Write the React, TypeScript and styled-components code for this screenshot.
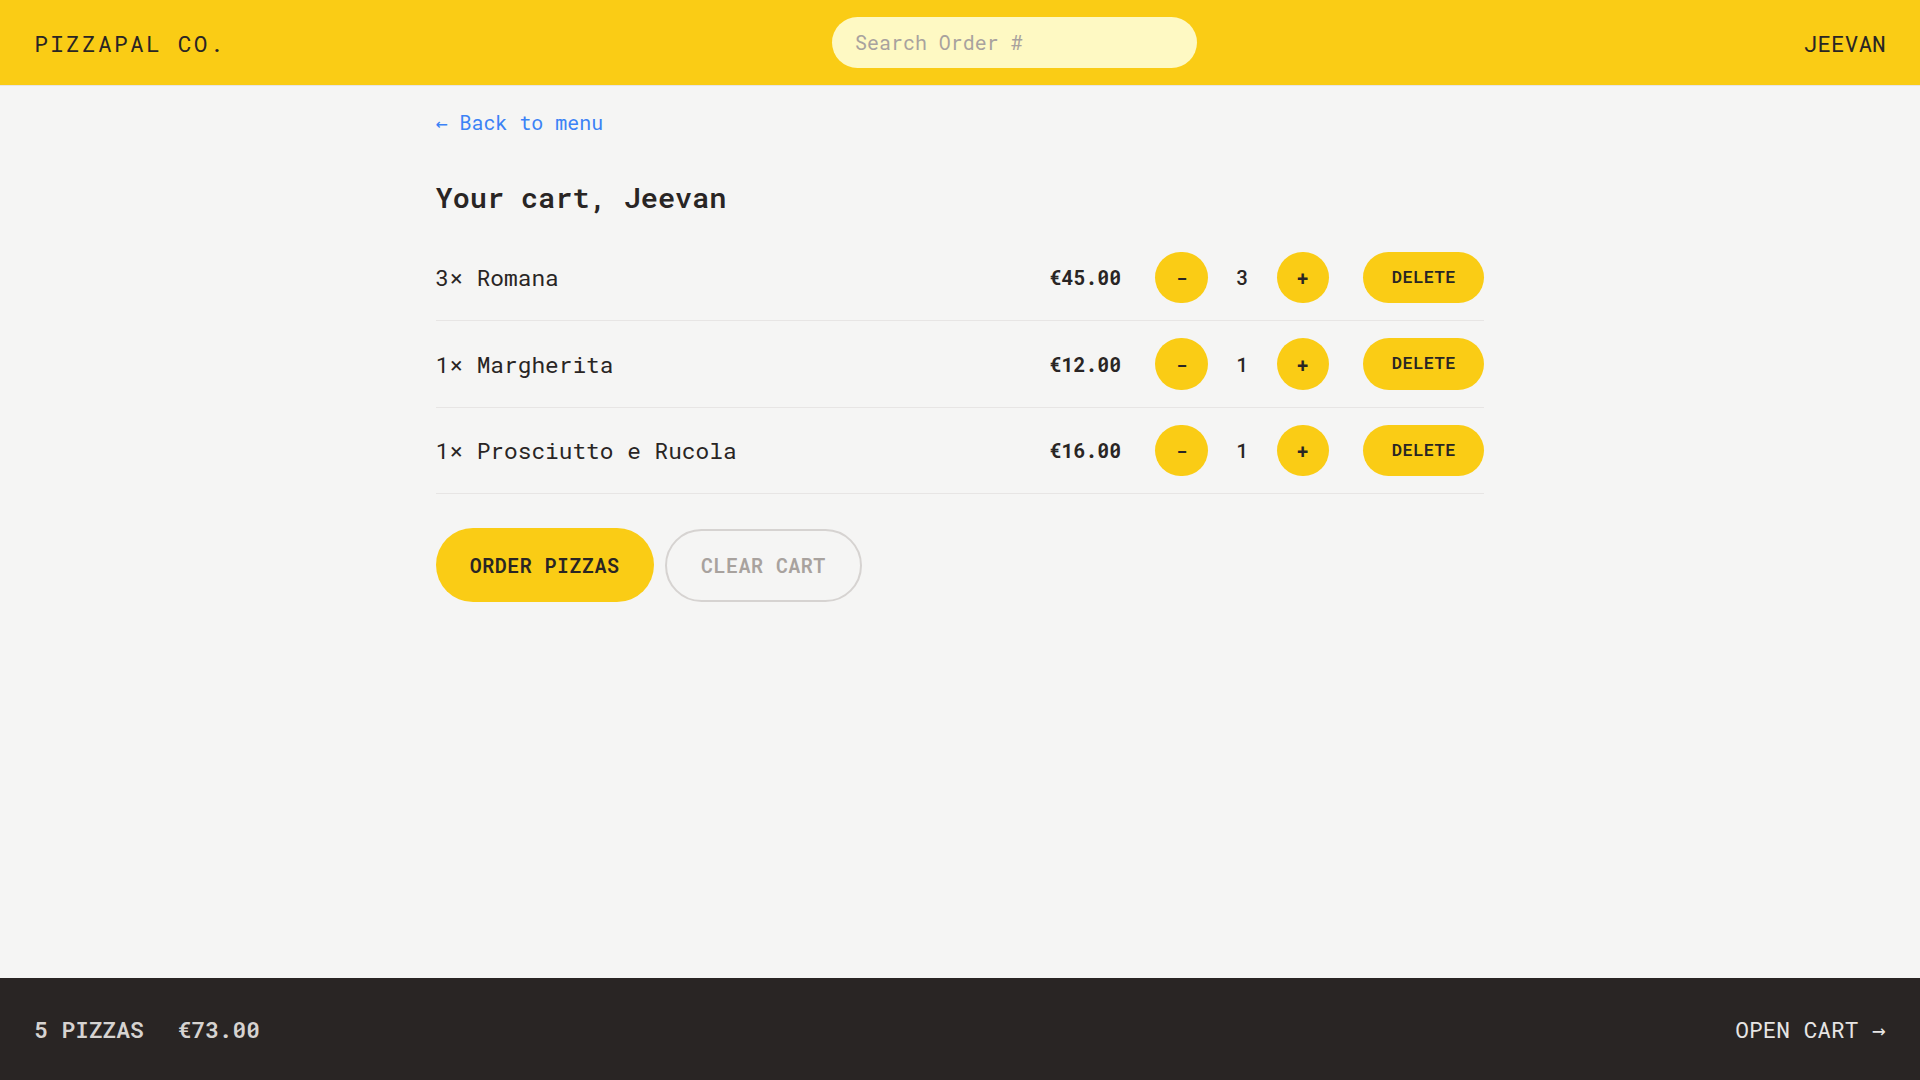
import React from "react";
import styled, { createGlobalStyle, css } from "styled-components";

const GlobalStyle = createGlobalStyle`
  *, *::before, *::after { box-sizing: border-box; }
  html { font-size: 22.8px; }
  body {
    margin: 0;
    background: #f5f5f4;
    color: #292524;
    font-family: "Roboto Mono", "DejaVu Sans Mono", "Liberation Mono", monospace;
    line-height: 1.5;
  }
`;

const Layout = styled.div`
  display: grid;
  height: 100vh;
  grid-template-rows: auto 1fr auto;
`;

const Header = styled.header`
  display: flex;
  align-items: center;
  justify-content: space-between;
  background: #facc15;
  padding: 0.75rem 1.5rem;
  border-bottom: 1px solid #e7e5e4;
  text-transform: uppercase;
`;

const Logo = styled.a`
  color: #292524;
  text-decoration: none;
  letter-spacing: 0.1em;
  font-size: 1rem;
`;

const SearchInput = styled.input`
  width: 16rem;
  border: none;
  border-radius: 9999px;
  background: #fef9c3;
  padding: 0.5rem 1rem;
  font-family: inherit;
  font-size: 0.875rem;
  line-height: 1.25rem;
  color: #292524;
  outline: none;
  &::placeholder { color: #a8a29e; }
`;

const UserName = styled.div`
  font-size: 1rem;
`;

const Scroller = styled.div`
  overflow: auto;
`;

const Main = styled.main`
  max-width: 48rem;
  margin: 0 auto;
`;

const Cart = styled.div`
  padding: 0.75rem 1rem;
`;

const BackRow = styled.div`
  line-height: 1.5rem;
`;

const BackLink = styled.a`
  font-size: 0.875rem;
  line-height: 1.25rem;
  color: #3b82f6;
  text-decoration: none;
`;

const Title = styled.h2`
  margin: 1.75rem 0 0;
  font-size: 1.25rem;
  line-height: 1.75rem;
  font-weight: 600;
`;

const ItemList = styled.ul`
  margin: 0.75rem 0 0;
  padding: 0;
  list-style: none;
  border-bottom: 1px solid #e7e5e4;
`;

const Item = styled.li`
  display: flex;
  align-items: center;
  justify-content: space-between;
  padding: 0.75rem 0;
  & + & { border-top: 1px solid #e7e5e4; }
`;

const ItemName = styled.p`
  margin: 0;
`;

const ItemActions = styled.div`
  display: flex;
  align-items: center;
  gap: 1.5rem;
`;

const Price = styled.p`
  margin: 0;
  font-size: 0.875rem;
  line-height: 1.25rem;
  font-weight: 700;
`;

const QtyGroup = styled.div`
  display: flex;
  align-items: center;
  gap: 1.25rem;
`;

const Qty = styled.span`
  font-size: 0.875rem;
  line-height: 1.25rem;
  font-weight: 500;
`;

type Variant = "primary" | "secondary" | "small" | "round";

const variants: Record<Variant, ReturnType<typeof css>> = {
  primary: css`
    padding: 1rem 1.5rem;
    font-size: 0.875rem;
    line-height: 1.25rem;
  `,
  small: css`
    padding: 0.625rem 1.25rem;
    font-size: 0.75rem;
    line-height: 1rem;
  `,
  round: css`
    padding: 0.5rem 0.875rem;
    font-size: 0.875rem;
    line-height: 1.25rem;
  `,
  secondary: css`
    padding: 0.875rem 1.5rem;
    font-size: 0.875rem;
    line-height: 1.25rem;
    background: transparent;
    border: 2px solid #d6d3d1;
    color: #a8a29e;
  `,
};

const Button = styled.button<{ $variant: Variant }>`
  display: inline-block;
  border: none;
  border-radius: 9999px;
  background: #facc15;
  color: #292524;
  font-family: inherit;
  font-weight: 600;
  text-transform: uppercase;
  letter-spacing: 0.025em;
  cursor: pointer;
  ${(p) => variants[p.$variant]}
`;

const CartActions = styled.div`
  margin-top: 1.5rem;
  display: flex;
  align-items: baseline;
  gap: 0.5rem;
`;

const Footer = styled.footer`
  display: flex;
  align-items: center;
  justify-content: space-between;
  background: #292524;
  padding: 34.5px 1.5rem 33.5px;
  color: #e7e5e4;
  text-transform: uppercase;
  font-size: 1rem;
  line-height: 1.5rem;
`;

const Summary = styled.p`
  margin: 0;
  display: flex;
  gap: 1.5rem;
  font-weight: 600;
  color: #d6d3d1;
`;

const OpenCart = styled.a`
  color: #e7e5e4;
  text-decoration: none;
`;

const items = [
  { id: 1, qty: 3, name: "Romana", price: "€45.00" },
  { id: 2, qty: 1, name: "Margherita", price: "€12.00" },
  { id: 3, qty: 1, name: "Prosciutto e Rucola", price: "€16.00" },
];

export default function App() {
  return (
    <>
      <GlobalStyle />
      <Layout>
        <Header>
          <Logo href="#">Pizzapal Co.</Logo>
          <form onSubmit={(e) => e.preventDefault()}>
            <SearchInput placeholder="Search Order #" />
          </form>
          <UserName>Jeevan</UserName>
        </Header>
        <Scroller>
          <Main>
            <Cart>
              <BackRow>
                <BackLink href="#">&larr; Back to menu</BackLink>
              </BackRow>
              <Title>Your cart, Jeevan</Title>
              <ItemList>
                {items.map((it) => (
                  <Item key={it.id}>
                    <ItemName>
                      {it.qty}&times; {it.name}
                    </ItemName>
                    <ItemActions>
                      <Price>{it.price}</Price>
                      <QtyGroup>
                        <Button $variant="round">-</Button>
                        <Qty>{it.qty}</Qty>
                        <Button $variant="round">+</Button>
                      </QtyGroup>
                      <Button $variant="small">Delete</Button>
                    </ItemActions>
                  </Item>
                ))}
              </ItemList>
              <CartActions>
                <Button $variant="primary">Order pizzas</Button>
                <Button $variant="secondary">Clear cart</Button>
              </CartActions>
            </Cart>
          </Main>
        </Scroller>
        <Footer>
          <Summary>
            <span>5 pizzas</span>
            <span>€73.00</span>
          </Summary>
          <OpenCart href="#">Open cart &rarr;</OpenCart>
        </Footer>
      </Layout>
    </>
  );
}
